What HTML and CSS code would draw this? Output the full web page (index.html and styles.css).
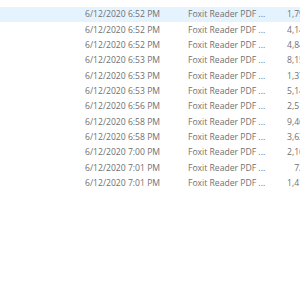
FILE: index.html
```html
<!DOCTYPE html>
<html>
<head>
<meta charset="utf-8">
<link rel="stylesheet" href="styles.css">
</head>
<body>
<div class="list">
  <div class="row hover"><span class="date">6/12/2020 6:52 PM</span><span class="type">Foxit Reader PDF ...</span><span class="size">1,795 KB</span></div>
  <div class="row"><span class="date">6/12/2020 6:52 PM</span><span class="type">Foxit Reader PDF ...</span><span class="size">4,142 KB</span></div>
  <div class="row"><span class="date">6/12/2020 6:52 PM</span><span class="type">Foxit Reader PDF ...</span><span class="size">4,845 KB</span></div>
  <div class="row"><span class="date">6/12/2020 6:53 PM</span><span class="type">Foxit Reader PDF ...</span><span class="size">8,152 KB</span></div>
  <div class="row"><span class="date">6/12/2020 6:53 PM</span><span class="type">Foxit Reader PDF ...</span><span class="size">1,372 KB</span></div>
  <div class="row"><span class="date">6/12/2020 6:53 PM</span><span class="type">Foxit Reader PDF ...</span><span class="size">5,142 KB</span></div>
  <div class="row"><span class="date">6/12/2020 6:56 PM</span><span class="type">Foxit Reader PDF ...</span><span class="size">2,512 KB</span></div>
  <div class="row"><span class="date">6/12/2020 6:58 PM</span><span class="type">Foxit Reader PDF ...</span><span class="size">9,460 KB</span></div>
  <div class="row"><span class="date">6/12/2020 6:58 PM</span><span class="type">Foxit Reader PDF ...</span><span class="size">3,632 KB</span></div>
  <div class="row"><span class="date">6/12/2020 7:00 PM</span><span class="type">Foxit Reader PDF ...</span><span class="size">2,160 KB</span></div>
  <div class="row"><span class="date">6/12/2020 7:01 PM</span><span class="type">Foxit Reader PDF ...</span><span class="size">724 KB</span></div>
  <div class="row"><span class="date">6/12/2020 7:01 PM</span><span class="type">Foxit Reader PDF ...</span><span class="size">1,417 KB</span></div>
</div>
</body>
</html>
```
FILE: styles.css
```css
html, body {
  margin: 0;
  padding: 0;
  background: #ffffff;
  overflow: hidden;
  width: 300px;
  height: 300px;
}
.list {
  padding-top: 6.5px;
  width: 340px;
  font-family: "Open Sans", "Noto Sans", sans-serif;
  font-size: 8.6px;
  color: #707070;
}
.row {
  display: flex;
  align-items: center;
  height: 15.36px;
  white-space: nowrap;
}
.row.hover {
  background: #e5f3ff;
}
.date {
  margin-left: 85px;
  width: 103px;
}
.type {
  width: 92px;
}
.size {
  width: 42px;
  text-align: right;
}
```
